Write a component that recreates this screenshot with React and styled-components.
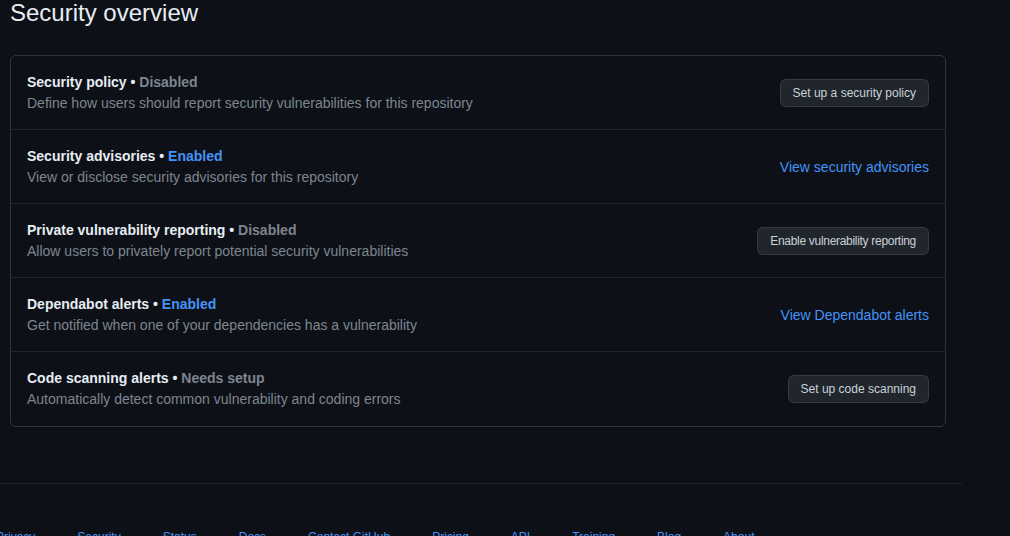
import React from 'react';
import styled, { createGlobalStyle } from 'styled-components';

const GlobalStyle = createGlobalStyle`
    html, body {
        margin: 0;
        padding: 0;
        background: #0d1117;
        overflow: hidden;
    }
    body {
        font-family: 'Liberation Sans', Arial, sans-serif;
        color: #e6edf3;
    }
`;

const features = [
    {
        title: 'Security policy',
        status: 'Disabled',
        desc: 'Define how users should report security vulnerabilities for this repository',
        action: { kind: 'button', label: 'Set up a security policy' },
    },
    {
        title: 'Security advisories',
        status: 'Enabled',
        desc: 'View or disclose security advisories for this repository',
        action: { kind: 'link', label: 'View security advisories' },
    },
    {
        title: 'Private vulnerability reporting',
        status: 'Disabled',
        desc: 'Allow users to privately report potential security vulnerabilities',
        action: { kind: 'button', label: 'Enable vulnerability reporting', tight: true },
    },
    {
        title: 'Dependabot alerts',
        status: 'Enabled',
        desc: 'Get notified when one of your dependencies has a vulnerability',
        action: { kind: 'link', label: 'View Dependabot alerts' },
    },
    {
        title: 'Code scanning alerts',
        status: 'Needs setup',
        desc: 'Automatically detect common vulnerability and coding errors',
        action: { kind: 'button', label: 'Set up code scanning' },
    },
];

const footerLinks = ['Privacy', 'Security', 'Status', 'Docs', 'Contact GitHub', 'Pricing', 'API', 'Training', 'Blog', 'About'];

const App = () => {
    return (
        <>
            <GlobalStyle />
            <Page>
                <Main>
                    <Heading>Security overview</Heading>
                    <Box>
                        {features.map((item) => (
                            <Row key={item.title}>
                                <Info>
                                    <Title>
                                        {item.title} • <Status $enabled={item.status === 'Enabled'}>{item.status}</Status>
                                    </Title>
                                    <Desc>{item.desc}</Desc>
                                </Info>
                                {item.action.kind === 'button'
                                    ? <Button type='button' $tight={item.action.tight}>{item.action.label}</Button>
                                    : <ActionLink href='#'>{item.action.label}</ActionLink>}
                            </Row>
                        ))}
                    </Box>
                </Main>
                <Footer>
                    <FooterNav>
                        {footerLinks.map((l) => (
                            <FooterLink key={l} href='#'>{l}</FooterLink>
                        ))}
                    </FooterNav>
                </Footer>
            </Page>
        </>
    );
};

const Page = styled.div`
    width: 1010px;
    height: 536px;
    overflow: hidden;
`;

const Main = styled.div`
    width: 936px;
    padding-left: 10px;
`;

const Heading = styled.h2`
    margin: 0;
    font-size: 24px;
    line-height: 25px;
    font-weight: 400;
    color: #e6edf3;
`;

const Box = styled.div`
    margin-top: 30px;
    border: 1px solid #30363d;
    border-radius: 6px;
`;

const Row = styled.div`
    display: flex;
    align-items: center;
    justify-content: space-between;
    padding: 16px 16px 16px;
    border-top: 1px solid #21262d;
    &:first-child { border-top: none; }
    &:last-child { padding-bottom: 17px; }
`;

const Info = styled.div`
    display: flex;
    flex-direction: column;
`;

const Title = styled.div`
    font-size: 14px;
    line-height: 20px;
    font-weight: 700;
    color: #e6edf3;
`;

const Status = styled.span`
    color: ${(p) => (p.$enabled ? '#4493f8' : '#7d8590')};
`;

const Desc = styled.div`
    font-size: 14px;
    line-height: 21px;
    padding-top: 1px;
    margin-bottom: -1px;
    color: #7d8590;
`;

const Button = styled.button`
    height: 28px;
    margin-top: 1px;
    padding: 0 12px;
    font-family: inherit;
    font-size: 12px;
    letter-spacing: ${(p) => (p.$tight ? '-0.3px' : 'normal')};
    color: #c9d1d9;
    background: #21262d;
    border: 1px solid rgba(240, 246, 252, 0.1);
    border-radius: 6px;
`;

const ActionLink = styled.a`
    font-size: 14px;
    line-height: 20px;
    margin-top: 1px;
    color: #4493f8;
    text-decoration: none;
`;

const Footer = styled.div`
    margin-top: 56px;
    width: 962px;
    border-top: 1px solid #21262d;
    padding-top: 44px;
`;

const FooterNav = styled.nav`
    display: flex;
    gap: 42px;
    margin-left: -4px;
`;

const FooterLink = styled.a`
    font-size: 12px;
    line-height: 18px;
    color: #4493f8;
    text-decoration: none;
`;

export default App;
